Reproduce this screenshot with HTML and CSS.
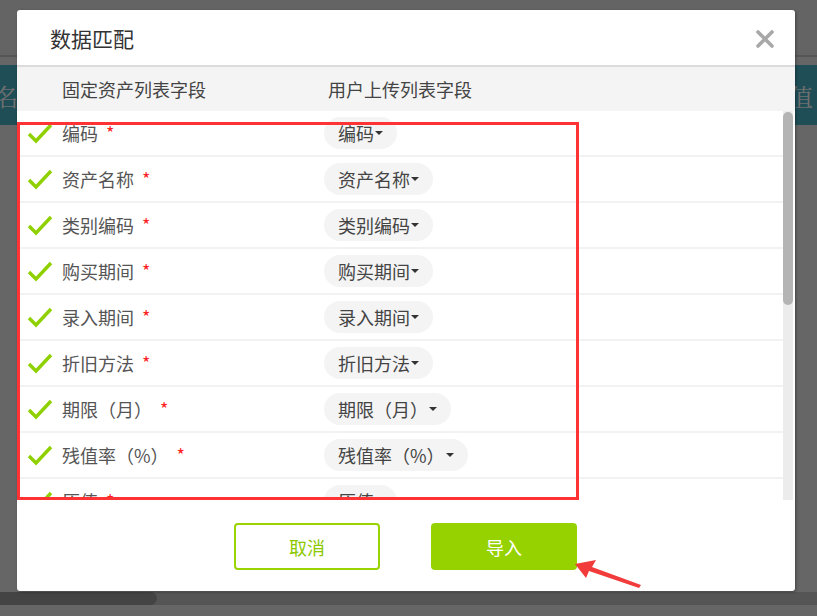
FILE: index.html
```html
<!DOCTYPE html>
<html lang="zh-CN">
<head>
    <meta charset="UTF-8">
    <title>数据匹配</title>
    <link rel="stylesheet" href="styles.css">
</head>
<body>
    <!-- Page behind the mask -->
    <div class="page">
        <div class="topbar"></div>
        <div class="band">
            <span>名</span>
            <span>值</span>
        </div>
        <div class="filler"></div>
        <div class="hscroll"><div class="hthumb"></div></div>
    </div>

    <!-- Dialog -->
    <div class="dialog">
        <div class="dialog-head">
            <h2>数据匹配</h2>
            <svg class="close" width="18" height="18" viewBox="0 0 18 18">
                <path d="M2 2 L16 16 M16 2 L2 16" stroke="#a8a8a8" stroke-width="3.6" stroke-linecap="round"/>
            </svg>
        </div>
        <div class="table-head">
            <div class="col-left">固定资产列表字段</div>
            <div class="col-right">用户上传列表字段</div>
        </div>
        <div class="table-body">
            <div class="rows" id="rows"></div>
            <div class="vscroll"><div class="vthumb"></div></div>
        </div>
        <div class="dialog-foot">
            <button class="btn btn-cancel">取消</button>
            <button class="btn btn-ok">导入</button>
        </div>
    </div>

    <!-- Annotation -->
    <div class="mark-box"></div>
    <svg class="mark-arrow" width="70" height="30" viewBox="0 0 70 30">
        <polygon points="0,4 21,0 17,7 66,25 64,28 14,11 11,18" fill="#f23b3b"/>
    </svg>

    <script>
        var fields = ['编码', '资产名称', '类别编码', '购买期间', '录入期间', '折旧方法',
            '期限（月）', '残值率（%）', '原值', '累计折旧', '净值', '使用部门',
            '使用状态', '存放地点', '供应商', '规格型号', '备注'];

        var html = '';
        fields.forEach(function (name) {
            html += '<div class="row">' +
                '<svg class="check" width="26" height="22" viewBox="0 0 26 22">' +
                '<path d="M2 12 L9 19 L24 3" fill="none" stroke="#8fd100" stroke-width="3.4"/></svg>' +
                '<div class="col-left">' + name + '<span class="req">*</span></div>' +
                '<div class="col-right"><span class="pill">' + name + '<i class="caret"></i></span></div>' +
                '</div>';
        });
        document.getElementById('rows').innerHTML = html;
    </script>
</body>
</html>
```

FILE: styles.css
```css
/* General body styling */
body {
    margin: 0;
    font-family: "Noto Sans CJK SC", "Liberation Sans", sans-serif;
    background-color: #666;
    overflow: hidden;
}

/* Background page (dimmed) */
.page {
    height: 616px;
    display: flex;
    flex-direction: column;
}

.topbar {
    height: 55px;
    background-color: #646464;
    border-bottom: 2px solid #555;
    margin-bottom: 8px;
}

.band {
    height: 60px;
    background-color: #1f4e57;
    display: flex;
    justify-content: space-between;
    align-items: center;
    color: #707070;
    font-family: "Noto Serif CJK SC", "Noto Sans CJK SC", serif;
    font-size: 24px;
    padding: 0 4px 0 0;
}

.band span:first-child {
    margin-left: -6px;
}

.filler {
    flex: 1;
}

.hscroll {
    height: 13px;
    background-color: #555;
    margin-bottom: 11px;
}

.hthumb {
    width: 157px;
    height: 13px;
    background-color: #444;
    border-radius: 0 7px 7px 0;
}

/* Dialog */
.dialog {
    position: absolute;
    left: 17px;
    top: 10px;
    width: 778px;
    height: 581px;
    background-color: #fff;
    border-radius: 3px;
    box-shadow: 1px 1px 3px rgba(0, 0, 0, 0.35);
    display: flex;
    flex-direction: column;
    overflow: hidden;
}

.dialog-head {
    height: 55px;
    display: flex;
    align-items: center;
    justify-content: space-between;
    padding: 0 21px 0 33px;
    border-bottom: 2px solid #dcdcdc;
}

.dialog-head h2 {
    margin: 0;
    font-size: 21px;
    font-weight: normal;
    color: #333;
}

.close {
    margin-top: 2px;
}

.table-head {
    height: 44px;
    background-color: #f4f4f4;
    display: flex;
    align-items: center;
    font-size: 18px;
    color: #444;
    padding-left: 45px;
}

.col-left {
    width: 266px;
    color: #555;
}

.table-head .col-left {
    color: #444;
}

.table-body {
    height: 389px;
    display: flex;
}

.rows {
    flex: 1;
    overflow: hidden;
}

.vscroll {
    width: 10px;
    margin-right: 2px;
    background-color: #ececec;
}

.vthumb {
    height: 193px;
    margin-top: 1px;
    background-color: #b4b4b4;
    border-radius: 5px;
}

.row {
    height: 44px;
    display: flex;
    align-items: center;
    border-bottom: 2px solid #f2f2f2;
    font-size: 18px;
    padding-left: 10px;
}

.check {
    width: 26px;
    margin-right: 9px;
}

.req {
    color: #f22;
    font-size: 18px;
    margin-left: 8px;
    position: relative;
    top: -1px;
}

.row .col-right {
    margin-left: -4px;
}

.pill {
    display: inline-flex;
    align-items: center;
    height: 32px;
    padding: 0 14px;
    border-radius: 16px;
    background-color: #f4f4f4;
    color: #444;
}

.caret {
    width: 0;
    height: 0;
    margin-left: 1px;
    border-left: 4px solid transparent;
    border-right: 4px solid transparent;
    border-top: 4px solid #333;
}

/* Footer */
.dialog-foot {
    flex: 1;
    display: flex;
    justify-content: center;
    align-items: flex-start;
    gap: 51px;
    padding-top: 23px;
    padding-right: 1px;
}

.btn {
    width: 146px;
    height: 47px;
    border-radius: 4px;
    font-family: "Noto Sans CJK SC", sans-serif;
    font-size: 18px;
    cursor: pointer;
}

.btn-cancel {
    background-color: #fff;
    border: 2px solid #9ad400;
    color: #8cc800;
}

.btn-ok {
    background-color: #96d200;
    border: none;
    color: #fff;
}

/* Red annotation */
.mark-box {
    position: absolute;
    left: 17px;
    top: 122px;
    width: 556px;
    height: 372px;
    border: 3px solid #f33;
}

.mark-arrow {
    position: absolute;
    left: 575px;
    top: 560px;
}
```
